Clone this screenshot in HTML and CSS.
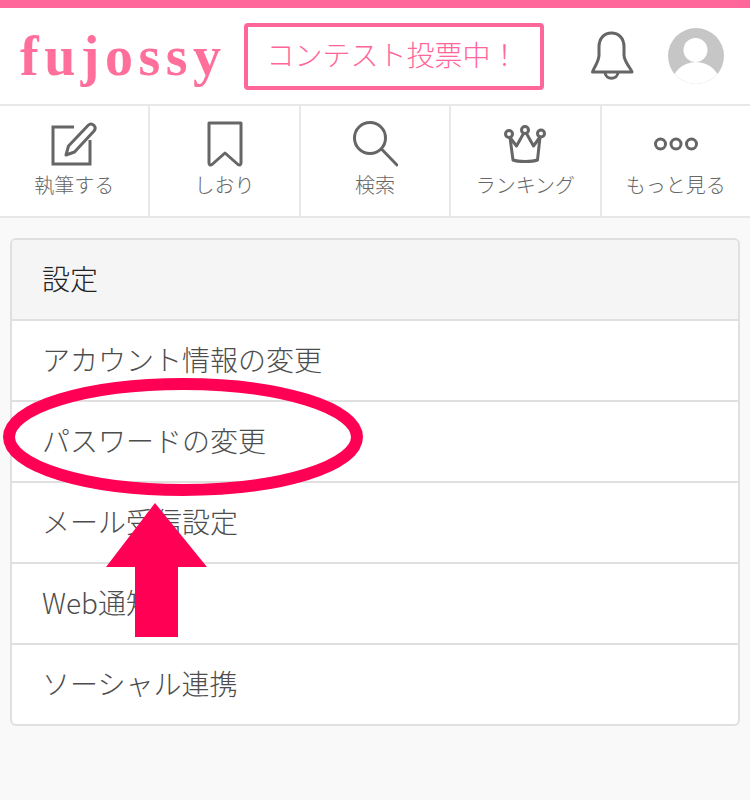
FILE: index.html
```html
<!DOCTYPE html>
<html lang="ja">
<head>
<meta charset="utf-8">
<title>設定</title>
<link rel="stylesheet" href="styles.css">
</head>
<body>
<header class="site-header">
  <div class="logo">fujossy</div>
  <a class="contest">コンテスト投票中！</a>
  <svg class="bell" viewBox="0 0 44 50" width="44" height="50" fill="none" stroke="#666" stroke-width="3" stroke-linejoin="round">
    <path d="M2.500 41 C2.500 39 9 31 9 24 V16 C9 7 14.500 2 21.500 2 C28.500 2 34 7 34 16 V24 C34 31 42 39 42 41 Z"/>
    <path d="M15 41.500 C15.500 49 27.500 49 28 41.500"/>
  </svg>
  <svg class="avatar" viewBox="0 0 56 56" width="56" height="56">
    <defs><clipPath id="av"><circle cx="28" cy="28" r="28"/></clipPath></defs>
    <circle cx="28" cy="28" r="28" fill="#c6c6c6"/>
    <g clip-path="url(#av)" fill="#fff">
      <circle cx="27.500" cy="22" r="12"/>
      <ellipse cx="28" cy="56" rx="24" ry="22"/>
    </g>
  </svg>
</header>
<nav class="tabs">
  <a class="tab">
    <svg viewBox="0 0 46 46" width="46" height="46" fill="none" stroke="#666" stroke-width="3">
      <path d="M23 6 H2 V43 H39 V19"/>
      <path d="M15 34 L17.500 25 L37 4.500 C39 2.500 41 2.500 43 4.500 C44.500 6 44.500 8 43 10 L23.500 31 Z" stroke-linejoin="round"/>
    </svg>
    <span>執筆する</span>
  </a>
  <a class="tab">
    <svg viewBox="0 0 36 46" width="36" height="46" fill="none" stroke="#666" stroke-width="3" stroke-linejoin="round">
      <path d="M2 2 H34 V42 C34 44 32.500 44.500 31 43.500 L18 32 L5 43.500 C3.500 44.500 2 44 2 42 Z"/>
    </svg>
    <span>しおり</span>
  </a>
  <a class="tab">
    <svg viewBox="0 0 46 46" width="46" height="46" fill="none" stroke="#666" stroke-width="3">
      <circle cx="18" cy="17" r="15.500"/>
      <path d="M29.500 28 L45 44" stroke-linecap="round"/>
    </svg>
    <span>検索</span>
  </a>
  <a class="tab">
    <svg viewBox="0 0 46 46" width="46" height="46" fill="none" stroke="#666" stroke-width="3" stroke-linejoin="round">
      <circle cx="7" cy="13" r="3.500"/>
      <circle cx="23" cy="9" r="3.500"/>
      <circle cx="39" cy="12.500" r="3.500"/>
      <path d="M8 16.500 L14.500 25 L21.500 12.500 M24.500 12.500 L31.500 25 L38 16 L35.500 39 C30 41 16 41 11 39 L8 16.500"/>
    </svg>
    <span>ランキング</span>
  </a>
  <a class="tab">
    <svg viewBox="0 0 46 46" width="46" height="46" fill="none" stroke="#666" stroke-width="3">
      <circle cx="7.500" cy="23" r="5"/>
      <circle cx="23" cy="23" r="5"/>
      <circle cx="38.500" cy="23" r="5"/>
    </svg>
    <span>もっと見る</span>
  </a>
</nav>
<main class="content">
  <section class="card">
    <h2 class="card-head">設定</h2>
    <a class="row">アカウント情報の変更</a>
    <a class="row">パスワードの変更</a>
    <a class="row">メール受信設定</a>
    <a class="row">Web通知</a>
    <a class="row">ソーシャル連携</a>
  </section>
</main>
<svg class="annotation" viewBox="0 0 750 800" width="750" height="800">
  <ellipse cx="183" cy="437" rx="174" ry="53" fill="none" stroke="#ff0055" stroke-width="12"/>
  <path d="M155 503 L207 567 H178 V637 H135 V567 H106 Z" fill="#ff0055"/>
</svg>
</body>
</html>
```
FILE: styles.css
```css
* { box-sizing: border-box; }
html, body { margin: 0; padding: 0; }
body {
  position: relative;
  width: 750px;
  height: 800px;
  overflow: hidden;
  background: #f9f9f9;
  color: #555;
  font-family: "Noto Sans CJK JP", "Liberation Sans", sans-serif;
  font-weight: 300;
}
.site-header {
  height: 106px;
  background: #fff;
  border-top: 8px solid #ff6699;
  border-bottom: 2px solid #e8e8e8;
  display: flex;
  align-items: center;
  padding-left: 20px;
}
.logo {
  width: 224px;
  font-family: "Liberation Serif", serif;
  font-weight: 700;
  font-size: 56px;
  line-height: 60px;
  letter-spacing: 5.500px;
  color: #ff6f9c;
}
.contest {
  width: 300px;
  height: 67px;
  padding: 0 3px 4px 0;
  border: 4px solid #ff6699;
  border-radius: 4px;
  color: #ff6699;
  font-size: 28px;
  line-height: 1;
  display: flex;
  align-items: center;
  justify-content: center;
  white-space: nowrap;
}
.bell { margin-left: 46px; }
.avatar { margin-left: 34px; }
.tabs {
  height: 112px;
  background: #fff;
  border-bottom: 2px solid #e8e8e8;
  display: flex;
}
.tab {
  flex: 1 1 0;
  display: flex;
  flex-direction: column;
  align-items: center;
  padding-top: 15px;
  border-left: 2px solid #e8e8e8;
  color: #666;
  font-size: 20px;
  line-height: 28px;
}
.tab:first-child { border-left: 0; }
.tab svg { display: block; height: 46px; margin-bottom: 4px; }
.content { padding: 20px 10px 0; }
.card {
  width: 730px;
  background: #fff;
  border: 2px solid #e0e0e0;
  border-radius: 6px;
  overflow: hidden;
}
.card-head {
  margin: 0;
  height: 79px;
  padding: 0 0 4px 30px;
  display: flex;
  align-items: center;
  background: #f5f5f5;
  color: #222;
  font-size: 28px;
  font-weight: 300;
}
.row {
  display: flex;
  align-items: center;
  height: 81px;
  padding: 0 0 4px 30px;
  border-top: 2px solid #e0e0e0;
  font-size: 28px;
  color: #4d4d4d;
}
.annotation {
  position: absolute;
  left: 0;
  top: 0;
  pointer-events: none;
}
```
